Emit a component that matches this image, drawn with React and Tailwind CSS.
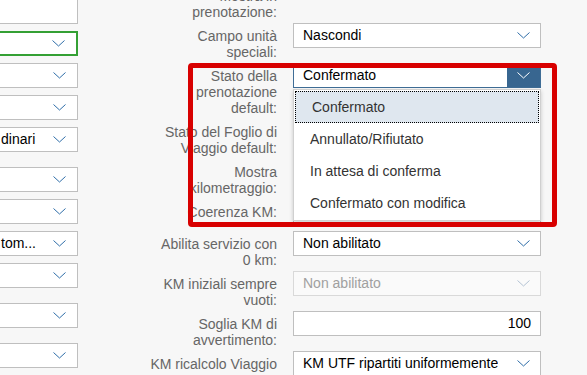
import React from 'react';

const Chevron = ({ color = '#2f6ea8' }) => (
  <svg width="13" height="7" viewBox="0 0 13 7" className="shrink-0">
    <path d="M0.5 0.5 L6.5 6 L12.5 0.5" fill="none" stroke={color} strokeWidth="1" />
  </svg>
);

// left column: clipped fields of the neighbouring form group
const leftRows = [
  { h: 'h-8', kind: 'input' },
  { h: 'h-8', kind: 'select', green: true },
  { h: 'h-8', kind: 'select' },
  { h: 'h-8', kind: 'select' },
  { h: 'h-10', kind: 'select', text: 'dinari' },
  { h: 'h-8', kind: 'select' },
  { h: 'h-8', kind: 'select' },
  { h: 'h-8', kind: 'select', text: 'tom...' },
  { h: 'h-10', kind: 'select' },
  { h: 'h-10', kind: 'select' },
  { h: 'h-8', kind: 'select' },
];

const options = ['Confermato', 'Annullato/Rifiutato', 'In attesa di conferma', 'Confermato con modifica'];

const rowHeight = { 1: 'h-8', 2: 'h-10', 3: 'h-14' };

const SelectBox = ({ value, disabled }) => (
  <div
    className={`flex h-[25px] w-full items-center justify-between border pl-[9px] pr-[10px] ${
      disabled ? 'border-[#d9d9d9] bg-[#fafafa] text-[#a0a0a0]' : 'border-[#bfbfbf] bg-white text-black'
    }`}
  >
    <span className="truncate">{value}</span>
    <Chevron color={disabled ? '#b4c4d4' : '#2f6ea8'} />
  </div>
);

const Row = ({ label, children }) => (
  <div className={`flex shrink-0 items-start gap-4 ${rowHeight[label.length]}`}>
    <div className="w-[137px] shrink-0 pt-[5px] text-right leading-4 text-[#666666]">
      {label.map((line, i) => (
        <div key={i} className="h-4 whitespace-nowrap">{line}</div>
      ))}
    </div>
    <div className="relative w-[248px] shrink-0">{children}</div>
  </div>
);

export default function App() {
  return (
    <div className="relative flex h-[375px] w-[587px] overflow-hidden bg-[#f7f7f7] text-[14px] font-['Liberation_Sans',Arial,sans-serif]">
      <div className="-mt-px flex w-[78px] shrink-0 flex-col">
        {leftRows.map((r, i) => (
          <div key={i} className={`shrink-0 ${r.h}`}>
            {r.kind === 'input' ? (
              <div className="h-[25px] border-y border-r border-[#bfbfbf] bg-white" />
            ) : (
              <div
                className={`flex h-[25px] items-center justify-between bg-white pr-[11px] text-black ${
                  r.green ? 'border-2 border-l-0 border-[#34a034]' : 'border-y border-r border-[#bfbfbf]'
                }`}
              >
                <span className="whitespace-nowrap pl-px">{r.text}</span>
                <Chevron />
              </div>
            )}
          </div>
        ))}
      </div>

      <div className="-mt-[17px] ml-[62px] flex flex-col">
        <Row label={['Mostra in', 'prenotazione:']}>
          <div className="h-[25px]" />
        </Row>
        <Row label={['Campo unità', 'speciali:']}>
          <SelectBox value="Nascondi" />
        </Row>
        <Row label={['Stato della', 'prenotazione', 'default:']}>
          <div className="flex h-[25px] w-full items-center border border-[#3f6d96] bg-white text-black">
            <span className="flex-1 pl-[9px]">Confermato</span>
            <div className="flex h-full w-[33px] items-center justify-center bg-[#386690]">
              <Chevron color="#ffffff" />
            </div>
          </div>
          <div className="absolute left-0 top-[26px] z-10 w-full border border-[#d0d0d0] bg-white py-px shadow-[0_2px_4px_rgba(0,0,0,0.2)]">
            {options.map((o, i) => (
              <div
                key={o}
                className={`flex h-8 items-center pl-4 text-[#333333] ${
                  i === 0 ? 'mx-px border border-dotted border-black bg-[#dfe7ef]' : ''
                }`}
              >
                {o}
              </div>
            ))}
          </div>
        </Row>
        <Row label={['Stato del Foglio di', 'Viaggio default:']}>
          <SelectBox value="" />
        </Row>
        <Row label={['Mostra', 'kilometraggio:']}>
          <SelectBox value="" />
        </Row>
        <Row label={['Coerenza KM:']}>
          <SelectBox value="" />
        </Row>
        <Row label={['Abilita servizio con', '0 km:']}>
          <SelectBox value="Non abilitato" />
        </Row>
        <Row label={['KM iniziali sempre', 'vuoti:']}>
          <SelectBox value="Non abilitato" disabled />
        </Row>
        <Row label={['Soglia KM di', 'avvertimento:']}>
          <div className="flex h-[25px] w-full items-center justify-end border border-[#bfbfbf] bg-white pr-[9px] text-black">
            100
          </div>
        </Row>
        <Row label={['KM ricalcolo Viaggio']}>
          <SelectBox value="KM UTF ripartiti uniformemente" />
        </Row>
      </div>

      {/* annotation frame */}
      <div className="pointer-events-none absolute left-[188px] top-[63px] z-20 h-[164px] w-[369px] rounded-[4px] border-[5px] border-[#d80000]" />
    </div>
  );
}
